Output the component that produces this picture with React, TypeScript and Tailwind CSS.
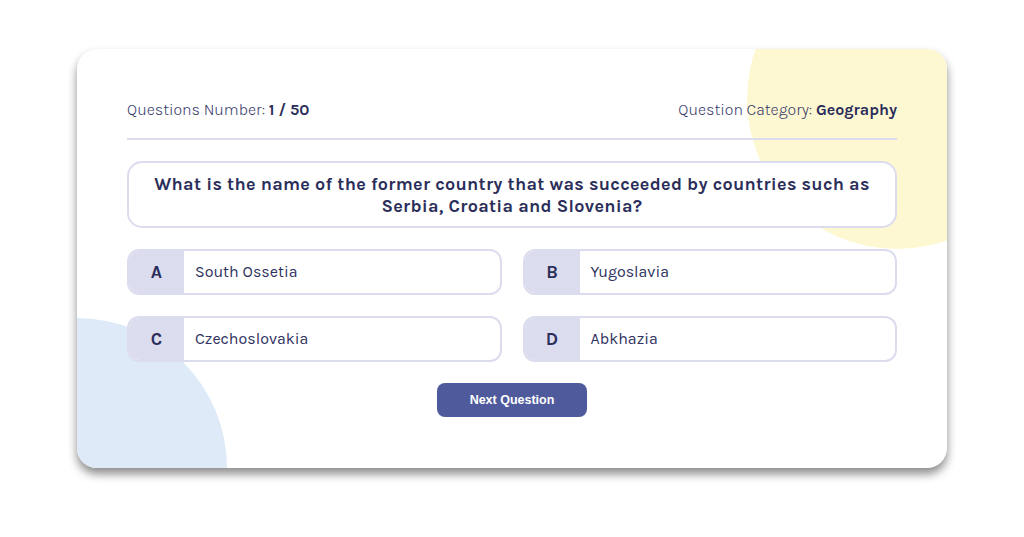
import React from "react";

const options = [
  { k: "A", t: "South Ossetia" },
  { k: "B", t: "Yugoslavia" },
  { k: "C", t: "Czechoslovakia" },
  { k: "D", t: "Abkhazia" },
];

export default function App() {
  return (
    <div className="w-[1024px] h-[537px] bg-white pt-[49px] flex justify-center" style={{ fontFamily: "Karla, 'Noto Sans', sans-serif" }}>
      <div className="relative w-[870px] h-[419px] bg-white rounded-[20px] overflow-hidden shadow-[0_6px_10px_rgba(0,0,0,0.45)]">
        <div className="absolute w-[300px] h-[300px] rounded-full bg-[#fef8d2] top-[-100px] right-[-100px]" />
        <div className="absolute w-[300px] h-[300px] rounded-full bg-[#deeaf8] bottom-[-150px] left-[-150px]" />
        <div className="relative px-[50px] pt-[49px] flex flex-col">
          <div className="flex justify-between items-center h-[24px] text-[16px] font-light text-[#3a3d6c]">
            <div>Questions Number: <span className="font-bold text-[#2a2d5a]">1 / 50</span></div>
            <div>Question Category: <span className="font-bold text-[#2a2d5a]">Geography</span></div>
          </div>
          <div className="h-[2px] bg-[#dcdcef] mt-[16px]" />
          <div className="mt-[21px] border-2 border-[#dcdcef] rounded-[15px] bg-white h-[67px] flex items-center justify-center text-center px-6 text-[18px] tracking-[0.3px] font-bold leading-[22px] text-[#2b2e5a]">
            What is the name of the former country that was succeeded by countries such as Serbia, Croatia and Slovenia?
          </div>
          <div className="mt-[21px] grid grid-cols-2 gap-x-[21px] gap-y-[21px]">
            {options.map((o) => (
              <div key={o.k} className="h-[46px] border-2 border-[#dcdcef] rounded-[12px] bg-white flex overflow-hidden">
                <div className="w-[55px] bg-[#dcdcef] flex items-center justify-center text-[18px] font-bold text-[#2b2e5a]">{o.k}</div>
                <div className="flex items-center pl-[11px] text-[16px] text-[#2f3260]">{o.t}</div>
              </div>
            ))}
          </div>
          <div className="mt-[21px] flex justify-center">
            <button className="w-[150px] h-[34px] rounded-[8px] bg-[#4f5a9d] text-white text-[12.5px] font-bold" style={{ fontFamily: "'Liberation Sans', Arial, sans-serif" }}>
              Next Question
            </button>
          </div>
        </div>
      </div>
    </div>
  );
}
